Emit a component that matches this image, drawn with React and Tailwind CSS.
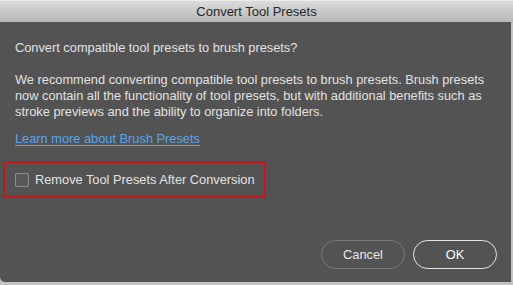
export default function App() {
  const font = { fontFamily: '"Liberation Sans", Arial, sans-serif' };
  return (
    <div className="w-[513px] h-[285px] bg-[#c2c2c2] flex flex-col overflow-hidden" style={font}>
      <div className="h-[22px] shrink-0 bg-gradient-to-b from-[#dcdcdc] to-[#b6b6b6] border-t border-[#ececec] flex items-center justify-center text-[13px] text-[#262626]">
        Convert Tool Presets
      </div>
      <div className="flex-1 mr-[2px] mb-[3px] bg-[#535353] rounded-bl-[5px] flex flex-col text-[12.8px] text-[#e2e2e2] leading-[16px]">
        <div className="pl-[15px] pt-[18px]">Convert compatible tool presets to brush presets?</div>
        <div className="pl-[15px] pt-[16px] pr-[8px]">
          We recommend converting compatible tool presets to brush presets. Brush presets now contain all the functionality of tool presets, but with additional benefits such as stroke previews and the ability to organize into folders.
        </div>
        <div className="pl-[15px] pt-[11px]">
          <span className="text-[#58a6ee] underline underline-offset-2">Learn more about Brush Presets</span>
        </div>
        <div className="ml-[3px] mt-[14px] w-[263px] h-[37px] border-2 border-[#c9151d] flex items-center pl-[10px] gap-[6px]">
          <div className="w-[14px] h-[14px] rounded-[2px] border border-[#8e8e8e] bg-[#585858]"></div>
          <span>Remove Tool Presets After Conversion</span>
        </div>
        <div className="flex-1"></div>
        <div className="flex justify-end gap-[8px] pr-[14px] pb-[13px]">
          <div className="w-[84px] h-[29px] rounded-full border border-[#7b7b7b] flex items-center justify-center text-[#e8e8e8]">Cancel</div>
          <div className="w-[84px] h-[29px] rounded-full border-[1.5px] border-[#e6e6e6] flex items-center justify-center text-white">OK</div>
        </div>
      </div>
    </div>
  );
}
